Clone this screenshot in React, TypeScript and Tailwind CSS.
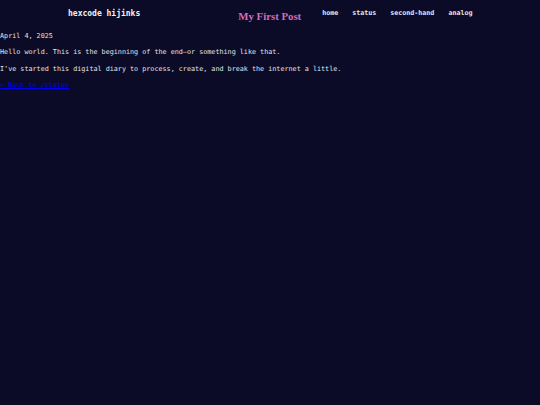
const NAV = ["home", "status", "second-hand", "analog"];

export default function App() {
  return (
    <div className="min-h-[405px] w-full bg-[#0b0b27] text-[#e4e4e4] font-['DejaVu_Sans_Mono',monospace] text-[6.75px] leading-none">
      <header className="flex items-center pt-[5px] h-[22px]">
        <div className="ml-[68px] text-[8px] font-bold text-[#f2f2f2]">hexcode hijinks</div>
        <h1 className="ml-[98px] mt-[6px] font-['Liberation_Serif',serif] text-[10.8px] font-bold text-[#d36cba]">
          My First Post
        </h1>
        <nav className="ml-[21px] flex gap-[14px] text-[6.66px] font-bold text-[#e8e8e8]">
          {NAV.map((n) => (
            <a key={n} href="#">
              {n}
            </a>
          ))}
        </nav>
      </header>
      <main className="pt-[11px] flex flex-col gap-[9.6px]">
        <p>April 4, 2025</p>
        <p>Hello world. This is the beginning of the end—or something like that.</p>
        <p>I’ve started this digital diary to process, create, and break the internet a little.</p>
        <a href="#" className="text-[#0000ee] underline">
          ← Back to /status
        </a>
      </main>
    </div>
  );
}
